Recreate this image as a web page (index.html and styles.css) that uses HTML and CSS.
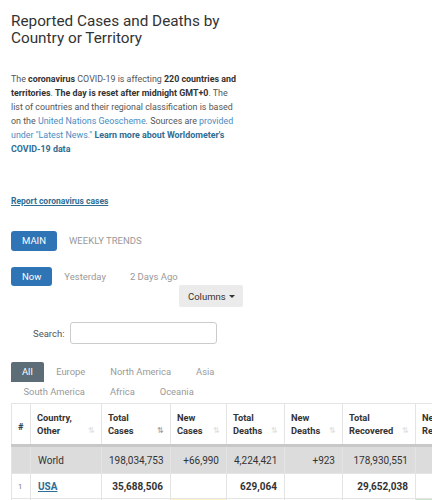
FILE: index.html
```html
<!DOCTYPE html>
<html lang="en">
<head>
    <meta charset="UTF-8">
    <meta name="viewport" content="width=device-width, initial-scale=1.0">
    <title>Coronavirus Cases by Country</title>
    <link rel="stylesheet" href="styles.css">
</head>
<body>

    <h1 class="page-title">Reported Cases and Deaths by Country or Territory</h1>

    <p class="intro">
        The <b>coronavirus</b> COVID-19 is affecting <b>220 countries and territories</b>.
        <b>The day is reset after midnight GMT+0</b>. The list of countries and their regional
        classification is based on the <a href="#">United Nations Geoscheme</a>. Sources are
        <a href="#">provided under "Latest News."</a> <a href="#" class="strong-link">Learn more about Worldometer's COVID-19 data</a>
    </p>

    <a href="#" class="report-link">Report coronavirus cases</a>

    <!-- Main / weekly tabs -->
    <div class="tabs">
        <span class="tab active">MAIN</span>
        <span class="tab">WEEKLY TRENDS</span>
    </div>

    <!-- Day tabs -->
    <div class="tabs day-tabs">
        <span class="tab active">Now</span>
        <span class="tab">Yesterday</span>
        <span class="tab">2 Days Ago</span>
    </div>

    <div class="columns-row">
        <button class="columns-btn">Columns <span class="caret"></span></button>
    </div>

    <div class="search-row">
        <label for="search">Search:</label>
        <input type="text" id="search">
    </div>

    <!-- Continent filters -->
    <div class="regions">
        <span class="region active">All</span>
        <span class="region">Europe</span>
        <span class="region">North America</span>
        <span class="region">Asia</span>
        <span class="region">South America</span>
        <span class="region">Africa</span>
        <span class="region">Oceania</span>
    </div>

    <div class="table-wrap">
        <table class="cases">
            <colgroup>
                <col style="width:19px">
                <col style="width:71px">
                <col style="width:69px">
                <col style="width:56px">
                <col style="width:58px">
                <col style="width:58px">
                <col style="width:73px">
                <col style="width:60px">
            </colgroup>
            <thead>
                <tr>
                    <th class="num">#</th>
                    <th>Country,<br>Other<span class="sort">&#8645;</span></th>
                    <th>Total<br>Cases<span class="sort on">&#8645;</span></th>
                    <th>New<br>Cases<span class="sort">&#8645;</span></th>
                    <th>Total<br>Deaths<span class="sort">&#8645;</span></th>
                    <th>New<br>Deaths<span class="sort">&#8645;</span></th>
                    <th>Total<br>Recovered<span class="sort">&#8645;</span></th>
                    <th>New<br>Recovered<span class="sort">&#8645;</span></th>
                </tr>
            </thead>
            <tbody>
                <tr class="world">
                    <td></td>
                    <td class="left">World</td>
                    <td>198,034,753</td>
                    <td>+66,990</td>
                    <td>4,224,421</td>
                    <td>+923</td>
                    <td>178,930,551</td>
                    <td></td>
                </tr>
                <tr class="bold-row">
                    <td class="num">1</td>
                    <td class="left"><a href="#">USA</a></td>
                    <td>35,688,506</td>
                    <td></td>
                    <td>629,064</td>
                    <td></td>
                    <td>29,652,038</td>
                    <td></td>
                </tr>
                <tr class="bold-row">
                    <td class="num">2</td>
                    <td class="left"><a href="#">India</a></td>
                    <td>31,769,132</td>
                    <td class="new-cases">+40,134</td>
                    <td>425,757</td>
                    <td class="new-deaths">+422</td>
                    <td>30,946,074</td>
                    <td class="new-rec">+36,946</td>
                </tr>
            </tbody>
        </table>
    </div>

</body>
</html>
```

FILE: styles.css
```css
body {
    font-family: Roboto, "Noto Sans", Arial, sans-serif;
    color: #333;
    background-color: #fff;
    margin: 0;
    padding: 0 0 0 11px;
    overflow: hidden;
}
a {
    color: #4a8cc2;
    text-decoration: none;
}
.page-title {
    font-size: 15.3px;
    font-weight: 400;
    line-height: 17px;
    margin: 13px 0 0 0;
    color: #333;
    width: 240px;
}
.intro {
    font-size: 8.9px;
    line-height: 14px;
    color: #555;
    margin: 25px 0 0 0;
    width: 228px;
}
.intro b {
    font-weight: 700;
    color: #333;
}
.intro .strong-link {
    font-weight: 700;
    color: #2f6d93;
}
.report-link {
    display: block;
    width: max-content;
    margin-top: 39px;
    font-size: 8.5px;
    line-height: 12px;
    font-weight: 700;
    color: #2f6d93;
    text-decoration: underline;
}
.tabs {
    display: flex;
    align-items: center;
    margin-top: 24px;
}
.tab {
    font-size: 9.5px;
    line-height: 20px;
    color: #999;
    padding: 0 12px;
}
.tab.active {
    background-color: #2f74b5;
    color: #fff;
    border-radius: 3px;
    padding: 0 11px;
}
.day-tabs {
    margin-top: 16px;
}
.day-tabs .tab {
    line-height: 19px;
}
.columns-row {
    margin-top: -1px;
    padding-left: 168px;
}
.columns-btn {
    display: block;
    white-space: nowrap;
    font-family: inherit;
    font-size: 9.5px;
    color: #333;
    background-color: #ebebeb;
    border: none;
    border-radius: 2px;
    padding: 0 8px 0 9px;
    height: 22px;
}
.caret {
    display: inline-block;
    border-top: 3.5px solid #333;
    border-left: 3px solid transparent;
    border-right: 3px solid transparent;
    vertical-align: middle;
    margin-left: 1px;
}
.search-row {
    display: flex;
    align-items: center;
    gap: 6px;
    margin-top: 15px;
    padding-left: 22px;
}
.search-row label {
    font-size: 9.5px;
    color: #555;
}
.search-row input {
    width: 147px;
    height: 22px;
    border: 1px solid #ccc;
    border-radius: 3px;
    box-sizing: border-box;
    padding: 0;
}
.regions {
    display: flex;
    flex-wrap: wrap;
    width: 235px;
    margin-top: 18px;
    font-size: 9.4px;
    color: #999;
}
.region {
    padding: 0 12.5px;
    line-height: 20px;
}
.region.active {
    background-color: #5d6d78;
    color: #fff;
    border-radius: 2px 2px 0 0;
    padding: 0 11px;
}
.table-wrap {
    width: 460px;
    margin-top: 1px;
}
.cases {
    border-collapse: collapse;
    table-layout: fixed;
    width: 464px;
    font-size: 10px;
}
.cases th {
    font-size: 9.3px;
    font-weight: 700;
    text-align: left;
    vertical-align: middle;
    line-height: 13px;
    padding: 0 6px;
    height: 36px;
    border: 1px solid #e4e4e4;
    border-bottom: 3px solid #c8c8c8;
    position: relative;
    color: #333;
}
.cases th.num {
    padding: 4px 0 0 6px;
}
.sort {
    position: absolute;
    right: 6px;
    bottom: 7px;
    font-size: 8px;
    font-weight: 400;
    color: #ddd;
}
.sort.on {
    color: #999;
}
.cases td {
    border: 1px solid #e4e4e4;
    text-align: right;
    padding: 0 7px;
    height: 24px;
    color: #333;
}
.cases td.left {
    text-align: left;
}
.cases td.num {
    font-size: 7.5px;
    font-weight: 400;
    color: #777;
    text-align: left;
    padding-left: 6px;
}
.world td {
    background-color: #dcdcdc;
    height: 26px;
    font-weight: 400;
}
.bold-row td {
    font-weight: 700;
}
.bold-row a {
    color: #2f6d93;
    text-decoration: underline;
}
.new-cases {
    background-color: #fff3c8;
}
.new-rec {
    background-color: #c8e6c9;
}
```
